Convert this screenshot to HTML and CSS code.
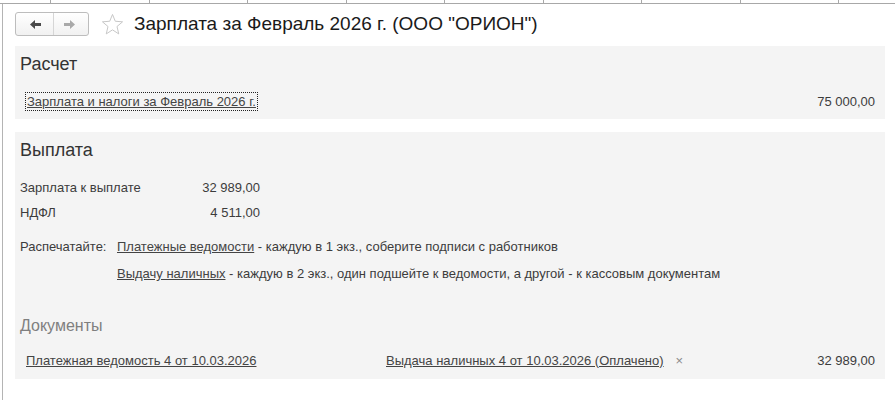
FILE: index.html
```html
<!DOCTYPE html>
<html lang="ru">
<head>
    <meta charset="UTF-8">
    <title>Зарплата за Февраль 2026 г.</title>
    <link rel="stylesheet" href="styles.css">
</head>
<body>
    <div class="tabs">
        <div class="tab tab-first"></div>
        <div class="tab"></div>
        <div class="tab"></div>
        <div class="tab"></div>
        <div class="tab"></div>
        <div class="tab"></div>
        <div class="tab"></div>
        <div class="tab"></div>
        <div class="tab"></div>
    </div>

    <div class="window">
        <div class="header">
            <div class="nav-buttons">
                <button class="nav-button nav-back">
                    <svg width="11" height="9" viewBox="0 0 11 9"><path d="M0 4.5 L5 0 V3 H11 V6 H5 V9 Z" fill="#4a4a4a"/></svg>
                </button>
                <button class="nav-button nav-forward">
                    <svg width="11" height="9" viewBox="0 0 11 9"><path d="M11 4.5 L6 0 V3 H0 V6 H6 V9 Z" fill="#a9a9a9"/></svg>
                </button>
            </div>
            <svg class="star" width="23" height="23" viewBox="0 0 24 24">
                <polygon points="12,1.5 14.9,8.6 22.5,9.2 16.7,14.1 18.5,21.8 12,17.6 5.5,21.8 7.3,14.1 1.5,9.2 9.1,8.6" fill="none" stroke="#c4c4c4" stroke-width="1"/>
            </svg>
            <h1 class="title">Зарплата за Февраль 2026 г. (ООО "ОРИОН")</h1>
        </div>

        <div class="panel panel-calc">
            <h2>Расчет</h2>
            <div class="calc-row">
                <a href="#" class="link focused">Зарплата и налоги за Февраль 2026 г.</a>
                <span class="amount">75 000,00</span>
            </div>
        </div>

        <div class="panel panel-pay">
            <h2>Выплата</h2>
            <div class="totals">
                <span>Зарплата к выплате</span>
                <span class="num">32 989,00</span>
                <span>НДФЛ</span>
                <span class="num">4 511,00</span>
            </div>
            <div class="print">
                <span>Распечатайте:</span>
                <span><a href="#" class="link">Платежные ведомости</a> - каждую в 1 экз., соберите подписи с работников</span>
                <span></span>
                <span><a href="#" class="link">Выдачу наличных</a> - каждую в 2 экз., один подшейте к ведомости, а другой - к кассовым документам</span>
            </div>
            <h3 class="docs-title">Документы</h3>
            <div class="docs-row">
                <a href="#" class="link doc-first">Платежная ведомость 4 от 10.03.2026</a>
                <a href="#" class="link">Выдача наличных 4 от 10.03.2026 (Оплачено)</a>
                <span class="remove">×</span>
                <span class="amount">32 989,00</span>
            </div>
        </div>
    </div>
</body>
</html>
```

FILE: styles.css
```css
:root {
    --panel: #f4f4f4;
    --text: #3c3c3c;
    --link: #444444;
    --line: #a8a8a8;
}

* {
    margin: 0;
    padding: 0;
    box-sizing: border-box;
}

body {
    font-family: "Liberation Sans", Arial, sans-serif;
    font-size: 13px;
    color: var(--text);
    background: #ffffff;
    width: 895px;
    height: 400px;
    overflow: hidden;
}

.tabs {
    display: flex;
    height: 4px;
    border-bottom: 1px solid var(--line);
}

.tab {
    flex: 0 0 98.5px;
    border-right: 1px solid var(--line);
}

.tab-first {
    flex-basis: 51px;
}

.window {
    margin-left: 2px;
    border-left: 1px solid #b4b4b4;
    padding: 8px 10px 0 12px;
    height: 396px;
}

.header {
    display: flex;
    align-items: center;
    height: 24px;
    margin-bottom: 10px;
}

.nav-buttons {
    display: flex;
    width: 74px;
    height: 24px;
    border: 1px solid #bdbdbd;
    border-radius: 3px;
    background: linear-gradient(#ffffff, #f1f1f1);
    overflow: hidden;
}

.nav-button {
    display: flex;
    align-items: center;
    justify-content: center;
    border: none;
    background: transparent;
    height: 100%;
}

.nav-back {
    width: 38px;
    border-right: 1px solid #d6d6d6;
    padding-left: 2px;
}

.nav-forward {
    flex: 1;
    padding-right: 3px;
}

.star {
    margin-left: 12px;
}

.title {
    margin-left: 10px;
    font-size: 19px;
    font-weight: normal;
    color: #1a1a1a;
    line-height: 24px;
}

.panel {
    background: var(--panel);
    padding: 8px 10px 8px 5px;
}

.panel h2 {
    font-size: 18px;
    font-weight: normal;
    line-height: 21px;
    color: #333333;
}

.link {
    color: var(--link);
    text-decoration: underline;
}

.calc-row {
    display: flex;
    justify-content: space-between;
    align-items: flex-end;
    margin-top: 17px;
    padding-left: 5px;
}

.focused {
    border: 1px dotted #222222;
    padding: 0 1px;
    line-height: 17px;
}

.amount {
    line-height: 17px;
    padding-bottom: 1px;
}

.panel-pay {
    margin-top: 13px;
    padding-bottom: 9px;
}

.totals {
    display: grid;
    grid-template-columns: 160px 80px;
    grid-auto-rows: 25px;
    align-items: center;
    margin-top: 14px;
}

.num {
    text-align: right;
}

.print {
    display: grid;
    grid-template-columns: 97px 1fr;
    grid-auto-rows: 27px;
    align-items: center;
    margin-top: 8px;
}

.docs-title {
    margin-top: 29px;
    font-size: 16px;
    font-weight: normal;
    line-height: 20px;
    color: #7f7f7f;
}

.docs-row {
    display: flex;
    align-items: center;
    height: 20px;
    margin-top: 14px;
    padding-left: 6px;
}

.doc-first {
    width: 360px;
}

.doc-first + .link {
    margin-right: 12px;
}

.remove {
    color: #8a8a8a;
    font-size: 13px;
}

.docs-row .amount {
    margin-left: auto;
    padding-bottom: 0;
}
```
